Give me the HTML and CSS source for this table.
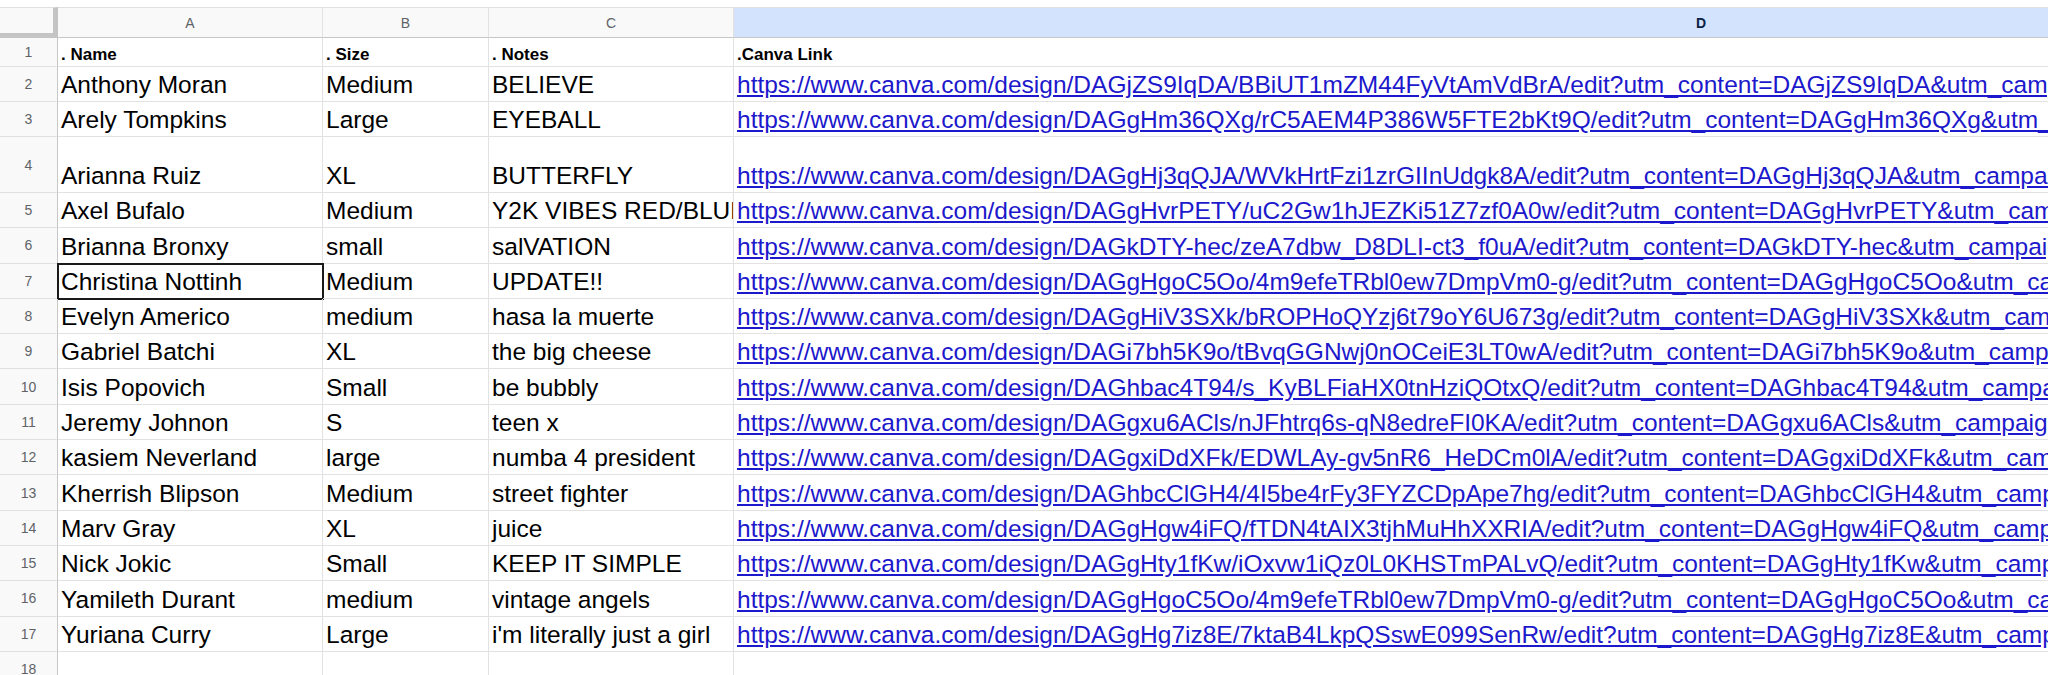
FILE: index.html
```html
<!DOCTYPE html>
<html>
<head>
<meta charset="utf-8">
<link rel="stylesheet" href="styles.css">
</head>
<body>
<div class="sheet">
  <div class="row hdr">
    <div class="cell rn corner"></div>
    <div class="cell ca colh">A</div>
    <div class="cell cb colh">B</div>
    <div class="cell cc colh">C</div>
    <div class="cell cd colh sel"><span class="dlab">D</span></div>
  </div>
  <div class="row r1">
    <div class="cell rn">1</div>
    <div class="cell ca b">. Name</div>
    <div class="cell cb b">. Size</div>
    <div class="cell cc b">. Notes</div>
    <div class="cell cd b">.Canva Link</div>
  </div>
  <div class="row rs">
    <div class="cell rn">2</div>
    <div class="cell ca">Anthony Moran</div>
    <div class="cell cb">Medium</div>
    <div class="cell cc">BELIEVE</div>
    <div class="cell cd"><a class="lnk">https://www.canva.com/design/DAGjZS9IqDA/BBiUT1mZM44FyVtAmVdBrA/edit?utm_content=DAGjZS9IqDA&amp;utm_campaign=designshare</a></div>
  </div>
  <div class="row rs">
    <div class="cell rn">3</div>
    <div class="cell ca">Arely Tompkins</div>
    <div class="cell cb">Large</div>
    <div class="cell cc">EYEBALL</div>
    <div class="cell cd"><a class="lnk">https://www.canva.com/design/DAGgHm36QXg/rC5AEM4P386W5FTE2bKt9Q/edit?utm_content=DAGgHm36QXg&amp;utm_campaign=designshare</a></div>
  </div>
  <div class="row rt">
    <div class="cell rn">4</div>
    <div class="cell ca">Arianna Ruiz</div>
    <div class="cell cb">XL</div>
    <div class="cell cc">BUTTERFLY</div>
    <div class="cell cd"><a class="lnk">https://www.canva.com/design/DAGgHj3qQJA/WVkHrtFzi1zrGIInUdgk8A/edit?utm_content=DAGgHj3qQJA&amp;utm_campaign=designshare</a></div>
  </div>
  <div class="row rr">
    <div class="cell rn">5</div>
    <div class="cell ca">Axel Bufalo</div>
    <div class="cell cb">Medium</div>
    <div class="cell cc">Y2K VIBES RED/BLUE</div>
    <div class="cell cd"><a class="lnk">https://www.canva.com/design/DAGgHvrPETY/uC2Gw1hJEZKi51Z7zf0A0w/edit?utm_content=DAGgHvrPETY&amp;utm_campaign=designshare</a></div>
  </div>
  <div class="row rr">
    <div class="cell rn">6</div>
    <div class="cell ca">Brianna Bronxy</div>
    <div class="cell cb">small</div>
    <div class="cell cc">salVATION</div>
    <div class="cell cd"><a class="lnk">https://www.canva.com/design/DAGkDTY-hec/zeA7dbw_D8DLI-ct3_f0uA/edit?utm_content=DAGkDTY-hec&amp;utm_campaign=designshare</a></div>
  </div>
  <div class="row rr">
    <div class="cell rn">7</div>
    <div class="cell ca active">Christina Nottinh</div>
    <div class="cell cb">Medium</div>
    <div class="cell cc">UPDATE!!</div>
    <div class="cell cd"><a class="lnk">https://www.canva.com/design/DAGgHgoC5Oo/4m9efeTRbl0ew7DmpVm0-g/edit?utm_content=DAGgHgoC5Oo&amp;utm_campaign=designshare</a></div>
  </div>
  <div class="row rr">
    <div class="cell rn">8</div>
    <div class="cell ca">Evelyn Americo</div>
    <div class="cell cb">medium</div>
    <div class="cell cc">hasa la muerte</div>
    <div class="cell cd"><a class="lnk">https://www.canva.com/design/DAGgHiV3SXk/bROPHoQYzj6t79oY6U673g/edit?utm_content=DAGgHiV3SXk&amp;utm_campaign=designshare</a></div>
  </div>
  <div class="row rr">
    <div class="cell rn">9</div>
    <div class="cell ca">Gabriel Batchi</div>
    <div class="cell cb">XL</div>
    <div class="cell cc">the big cheese</div>
    <div class="cell cd"><a class="lnk">https://www.canva.com/design/DAGi7bh5K9o/tBvqGGNwj0nOCeiE3LT0wA/edit?utm_content=DAGi7bh5K9o&amp;utm_campaign=designshare</a></div>
  </div>
  <div class="row rr">
    <div class="cell rn">10</div>
    <div class="cell ca">Isis Popovich</div>
    <div class="cell cb">Small</div>
    <div class="cell cc">be bubbly</div>
    <div class="cell cd"><a class="lnk">https://www.canva.com/design/DAGhbac4T94/s_KyBLFiaHX0tnHziQOtxQ/edit?utm_content=DAGhbac4T94&amp;utm_campaign=designshare</a></div>
  </div>
  <div class="row rr">
    <div class="cell rn">11</div>
    <div class="cell ca">Jeremy Johnon</div>
    <div class="cell cb">S</div>
    <div class="cell cc">teen x</div>
    <div class="cell cd"><a class="lnk">https://www.canva.com/design/DAGgxu6ACls/nJFhtrq6s-qN8edreFI0KA/edit?utm_content=DAGgxu6ACls&amp;utm_campaign=designshare</a></div>
  </div>
  <div class="row rr">
    <div class="cell rn">12</div>
    <div class="cell ca">kasiem Neverland</div>
    <div class="cell cb">large</div>
    <div class="cell cc">numba 4 president</div>
    <div class="cell cd"><a class="lnk">https://www.canva.com/design/DAGgxiDdXFk/EDWLAy-gv5nR6_HeDCm0lA/edit?utm_content=DAGgxiDdXFk&amp;utm_campaign=designshare</a></div>
  </div>
  <div class="row rr">
    <div class="cell rn">13</div>
    <div class="cell ca">Kherrish Blipson</div>
    <div class="cell cb">Medium</div>
    <div class="cell cc">street fighter</div>
    <div class="cell cd"><a class="lnk">https://www.canva.com/design/DAGhbcClGH4/4I5be4rFy3FYZCDpApe7hg/edit?utm_content=DAGhbcClGH4&amp;utm_campaign=designshare</a></div>
  </div>
  <div class="row rr">
    <div class="cell rn">14</div>
    <div class="cell ca">Marv Gray</div>
    <div class="cell cb">XL</div>
    <div class="cell cc">juice</div>
    <div class="cell cd"><a class="lnk">https://www.canva.com/design/DAGgHgw4iFQ/fTDN4tAIX3tjhMuHhXXRIA/edit?utm_content=DAGgHgw4iFQ&amp;utm_campaign=designshare</a></div>
  </div>
  <div class="row rr">
    <div class="cell rn">15</div>
    <div class="cell ca">Nick Jokic</div>
    <div class="cell cb">Small</div>
    <div class="cell cc">KEEP IT SIMPLE</div>
    <div class="cell cd"><a class="lnk">https://www.canva.com/design/DAGgHty1fKw/iOxvw1iQz0L0KHSTmPALvQ/edit?utm_content=DAGgHty1fKw&amp;utm_campaign=designshare</a></div>
  </div>
  <div class="row rr">
    <div class="cell rn">16</div>
    <div class="cell ca">Yamileth Durant</div>
    <div class="cell cb">medium</div>
    <div class="cell cc">vintage angels</div>
    <div class="cell cd"><a class="lnk">https://www.canva.com/design/DAGgHgoC5Oo/4m9efeTRbl0ew7DmpVm0-g/edit?utm_content=DAGgHgoC5Oo&amp;utm_campaign=designshare</a></div>
  </div>
  <div class="row rr">
    <div class="cell rn">17</div>
    <div class="cell ca">Yuriana Curry</div>
    <div class="cell cb">Large</div>
    <div class="cell cc">i'm literally just a girl</div>
    <div class="cell cd"><a class="lnk">https://www.canva.com/design/DAGgHg7iz8E/7ktaB4LkpQSswE099SenRw/edit?utm_content=DAGgHg7iz8E&amp;utm_campaign=designshare</a></div>
  </div>
  <div class="row rr">
    <div class="cell rn">18</div>
    <div class="cell ca"></div>
    <div class="cell cb"></div>
    <div class="cell cc"></div>
    <div class="cell cd"></div>
  </div>
</div>
</body>
</html>
```
FILE: styles.css
```css
html, body {
  margin: 0;
  padding: 0;
  background: #ffffff;
  overflow: hidden;
}

.sheet {
  padding-top: 7px;
  width: 2048px;
  font-family: "Liberation Sans", Arial, sans-serif;
  color: #000000;
}

.row {
  display: flex;
  box-sizing: border-box;
}

.cell {
  box-sizing: border-box;
  border-right: 1px solid #e2e2e2;
  border-bottom: 1px solid #e2e2e2;
  overflow: hidden;
  white-space: nowrap;
  display: flex;
  align-items: flex-end;
  padding: 0 0 4px 3px;
  font-size: 24.5px;
  line-height: 24px;
}

.rn {
  width: 58px;
  flex: none;
  justify-content: center;
  align-items: center;
  padding: 0;
  font-size: 14px;
  line-height: 14px;
  color: #5f6368;
  background: #f9f9f9;
  border-right-color: #c7c7c7;
  border-bottom-color: #e0e0e0;
}

.ca { width: 265px; flex: none; }
.cb { width: 166px; flex: none; }
.cc { width: 245px; flex: none; }
.cd {
  width: 1314px;
  flex: none;
  border-right: none;
}

.hdr {
  height: 31px;
}

.hdr .cell {
  border-top: 1px solid #e0e0e0;
  border-bottom: 1px solid #c7c7c7;
  background: #f9f9f9;
}

.colh {
  justify-content: center;
  align-items: center;
  padding: 0;
  font-size: 14px;
  line-height: 14px;
  color: #5f6368;
}

.colh.sel {
  background: #d3e3fd;
  color: #0b1f44;
  font-weight: bold;
  justify-content: flex-start;
}

.dlab {
  padding-left: 962px;
}

.hdr .corner {
  border-right: 5px solid #c4c4c4;
  border-bottom: 5px solid #c4c4c4;
  background: #f9f9f9;
}

.r1 { height: 29px; }
.rs { height: 35px; }
.rt { height: 56px; }
.rr { height: 35.3px; }

.b {
  font-weight: bold;
  font-size: 17px;
  line-height: 17px;
  padding-bottom: 3px;
}

.active {
  outline: 2px solid #1a1a1a;
  outline-offset: -1px;
}

.lnk {
  color: #1c18cc;
  text-decoration: underline;
}
```
